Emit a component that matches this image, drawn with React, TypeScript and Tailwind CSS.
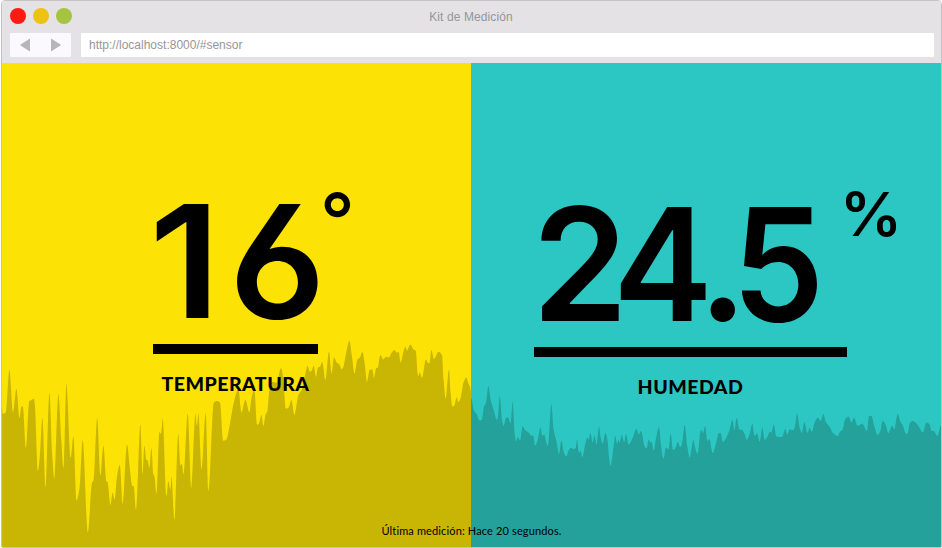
type Point = [number, number];

const TEMPERATURE: Point[] = [
  [1, 396], [3, 414], [5.7, 412.5], [9.4, 370], [13, 412.5], [16.4, 389], [19.4, 418], [21.5, 406.5], [22.8, 406.5], [26, 448],
  [29.3, 401], [31.8, 400], [33.7, 398.5], [34.8, 404], [37.8, 471.5], [39.7, 458], [42.4, 418], [45.7, 487], [49.4, 393], [52.3, 456],
  [54.4, 479.5], [58.4, 394], [61.3, 440], [63.4, 468], [66.4, 384], [70.7, 457.5], [73.4, 436.5], [76.4, 500.5], [79.7, 486.7],
  [82.6, 440], [87.8, 532.5], [92, 483], [93.6, 480], [97.2, 418], [100.4, 475], [103.4, 445.7], [106.4, 481.5], [107.4, 481.5],
  [110.4, 505], [112.6, 492.7], [114.6, 499.6], [117, 476.7], [119.8, 465], [122.6, 504], [127, 444.4], [130, 470], [132.3, 486],
  [133.6, 486], [136, 510], [140.4, 424.4], [142.6, 474], [144.4, 445.7], [146.4, 460], [147.4, 460], [149.4, 468], [151.4, 448.4],
  [153.4, 474], [154.4, 476], [156.6, 494], [159.4, 432], [161, 434], [162.7, 419], [166.6, 495.6], [168.4, 481], [170.3, 490],
  [171.6, 477], [174.4, 519.6], [178.3, 434], [180.4, 465.6], [181.7, 463.4], [183.6, 474.4], [187.7, 413.4], [191.4, 488.6],
  [195.4, 414], [197, 426], [198.4, 413.4], [201.6, 469], [205.7, 413], [208.5, 491], [213.8, 402.6], [216.7, 401], [220, 402.4],
  [223, 440.7], [226.4, 439.4], [230, 423.4], [234.4, 400], [238.4, 389.4], [241.4, 412.4], [245.4, 399.7], [249.4, 412.4],
  [251.7, 396.7], [254.4, 390], [257, 424.7], [259, 423.4], [261.4, 415], [263.4, 426], [265.7, 414], [267.3, 411.7], [269.3, 390],
  [271.7, 381.7], [276.7, 382.7], [281, 368], [283.4, 380], [285.7, 408.7], [288.7, 407.4], [291.4, 400], [294.4, 415],
  [298.4, 395], [301.7, 390], [304.5, 378], [307.7, 366], [309.7, 371.7], [311.7, 370.7], [313.7, 365.7], [316, 376.7], [318, 367.4],
  [320, 366.7], [322.3, 362], [325.3, 380], [329, 351.4], [331.6, 373.4], [334, 357.4], [336.7, 362.4], [339.4, 364.4], [341.7, 369.4],
  [343.4, 366.7], [346.7, 350], [349.4, 340.7], [352, 356.7], [354.4, 373.4], [357.4, 359.4], [360, 357.4], [362.4, 352],
  [364.7, 363.4], [367, 381.7], [369.7, 369.4], [372.4, 369.4], [374, 377.7], [376, 368.4], [377.7, 367.7], [380.3, 355],
  [383.4, 359.4], [386, 356.7], [388.7, 357.4], [391.7, 352.7], [394.4, 350], [397, 352.7], [398.6, 351.7], [400.7, 362.4],
  [404, 349.4], [405.4, 346.7], [407, 350.4], [410.4, 344.4], [413.4, 349.4], [415.7, 350.7], [418.2, 376], [419.7, 372.4],
  [422, 377.7], [426, 359.4], [427.7, 362.7], [429.4, 363.4], [431.4, 350], [434, 359], [438.4, 351.7], [442, 355], [443.7, 380],
  [445.7, 398.7], [449, 369.4], [450.7, 393.4], [452.3, 406.4], [454, 406], [456.7, 397.4], [458.4, 402], [460.7, 397.7],
  [463.4, 382.7], [466.4, 377.4], [468.4, 383.4], [470, 386.7], [471.3, 393],
];

const HUMIDITY: Point[] = [
  [471, 398], [474, 410.7], [476.7, 414], [479.3, 420.3], [481.7, 420], [484, 406.7], [486, 402.7], [488.4, 386], [490.7, 400],
  [493.7, 410], [496.7, 419.7], [498, 416.7], [499.7, 396], [502, 420], [503.7, 426], [506, 417.7], [508, 417.4], [510.7, 423.4],
  [512.7, 401.7], [514.7, 433.4], [516, 441], [518, 437], [520, 440.7], [522.7, 426], [525, 430], [528.4, 432.4], [531.7, 435.7],
  [533.4, 435.7], [535, 445.7], [538, 438.4], [540.4, 427.7], [542.4, 435.7], [544, 434.4], [547.7, 446], [549, 436.7],
  [551.3, 403.7], [553.7, 430], [556.7, 442.4], [559, 454], [561.4, 440.4], [563.7, 451.7], [566.4, 456.4], [568.4, 451],
  [571, 447.7], [573.4, 449], [575.7, 448], [577, 439.4], [579, 452.7], [580.4, 450.7], [582.4, 457], [585, 445], [587.4, 437.4],
  [588.7, 439.4], [590.4, 432.7], [592.7, 442.4], [594.4, 435.7], [596.7, 444.7], [599, 426.7], [600.7, 437.4], [602.7, 443.4],
  [605.4, 433], [607.7, 441.7], [609, 456.7], [610.4, 465.7], [613, 451.7], [615.4, 435.7], [617, 443.7], [618.4, 439.7],
  [619.7, 442.7], [621.7, 435], [624.3, 442], [626, 434], [628.7, 444.4], [632.7, 437.7], [636.4, 429], [639, 434.4],
  [640.7, 431], [642, 433.4], [644.4, 446], [646.7, 448.4], [648.7, 439.4], [650.3, 442.4], [651.7, 441.7], [653.7, 450.7],
  [656, 438.4], [659, 427], [661, 445], [663.4, 458.7], [666, 447.4], [668.7, 449.4], [670.7, 433.4], [673, 450], [676, 446.7],
  [677.7, 442], [680.4, 447], [682, 443.4], [684.7, 425], [687.4, 446.7], [689.7, 457.4], [693.4, 440], [695.4, 448.4],
  [697.7, 453.7], [700.4, 431.7], [701.7, 430], [703, 433.4], [705, 426], [707.4, 441], [709.4, 439], [712.7, 453],
  [716.4, 441.7], [718.4, 433.4], [720.7, 433], [723, 442], [726.7, 436.7], [729.4, 430], [732.4, 420], [734.4, 430],
  [736.7, 417.7], [739.4, 429.4], [741.7, 429.7], [744.4, 433.4], [746.7, 439.7], [749.7, 433.4], [752.4, 424], [754.4, 435.7],
  [757, 433.4], [759.7, 441.4], [762.4, 427.4], [764.7, 439.7], [767.4, 436.7], [769.7, 431.7], [771.4, 432.7], [773.7, 424.4],
  [776.4, 436.4], [782, 437], [785.4, 429], [787.4, 434.4], [789.7, 429.4], [793.4, 430], [795, 426.7], [797, 413.4],
  [799.4, 426.7], [801.7, 432.7], [804.4, 422], [807.4, 433], [809.7, 427.7], [811.7, 431.7], [815, 421.7], [818, 417.7],
  [820.7, 421], [823.4, 414], [825.7, 421.7], [830, 427.4], [832.7, 432.7], [837.7, 436], [840, 431.7], [842.7, 429.4],
  [845, 419.4], [848.7, 416.4], [851.4, 422.4], [854, 417.7], [857.7, 425.7], [862.4, 423.7], [867, 431], [869, 416],
  [871.4, 416], [874.4, 426.7], [877.7, 435], [880.4, 430.7], [882.7, 420.7], [885.7, 425], [888.4, 433], [892, 426],
  [894.4, 429.4], [897.7, 414], [900.4, 421.7], [903, 425.7], [905.7, 433.4], [907.7, 433.4], [909.7, 423.4], [912.7, 421],
  [916.7, 423.7], [919.4, 427.4], [922.7, 432.4], [926.4, 422.4], [929.7, 424.4], [931.4, 430.7], [934.4, 431.4], [937.4, 436],
  [941, 425],
];

const BOTTOM = 548;

// Monotone cubic through the samples: smooth slopes, rounded peaks, no overshoot.
function areaPath(points: Point[]): string {
  const n = points.length;
  const slope = (i: number) => {
    if (i === 0 || i === n - 1) return 0;
    const a = (points[i][1] - points[i - 1][1]) / (points[i][0] - points[i - 1][0]);
    const b = (points[i + 1][1] - points[i][1]) / (points[i + 1][0] - points[i][0]);
    return a * b <= 0 ? 0 : (2 * a * b) / (a + b);
  };
  let d = `M${points[0][0]} ${BOTTOM}L${points[0][0]} ${points[0][1]}`;
  for (let i = 0; i < n - 1; i++) {
    const [x0, y0] = points[i];
    const [x1, y1] = points[i + 1];
    const h = (x1 - x0) / 3;
    d += `C${x0 + h} ${y0 + slope(i) * h} ${x1 - h} ${y1 - slope(i + 1) * h} ${x1} ${y1}`;
  }
  return `${d}L${points[n - 1][0]} ${BOTTOM}Z`;
}

function Chart({ points, viewBox, className }: { points: Point[]; viewBox: string; className: string }) {
  return (
    <svg className={`absolute inset-0 h-full w-full ${className}`} viewBox={viewBox} preserveAspectRatio="none">
      <path d={areaPath(points)} />
    </svg>
  );
}

function Toolbar() {
  return (
    <header className="flex h-[62px] flex-col bg-[#e4e2e5] pl-2 pr-[7px] font-['Liberation_Sans',sans-serif] text-xs text-[#969696]">
      <div className="grid h-8 grid-cols-[1fr_auto_1fr] items-center">
        <div className="flex gap-[7.5px] pb-0.5">
          <span className="size-[15.5px] rounded-full bg-[#ff1a12]" />
          <span className="size-[15.5px] rounded-full bg-[#edc211]" />
          <span className="size-[15.5px] rounded-full bg-[#a5c441]" />
        </div>
        <span className="pr-0.5 tracking-[0.1px]">Kit de Medición</span>
      </div>
      <div className="flex h-6 gap-2.5">
        <div className="flex w-[61px] items-center justify-between rounded-[1px] bg-[#fbf9fd] px-2.5">
          <svg className="h-[14px] w-[11px] fill-[#b6b5bc]" viewBox="0 0 11 14">
            <path d="M10 .5v13L.5 7.6V6.4z" />
          </svg>
          <svg className="h-[14px] w-[11px] fill-[#b6b5bc]" viewBox="0 0 11 14">
            <path d="M1 .5v13l9.5-5.9V6.4z" />
          </svg>
        </div>
        <div className="flex flex-1 items-center rounded-[1px] bg-white px-2">http://localhost:8000/#sensor</div>
      </div>
    </header>
  );
}

const FIGURES =
  "flex h-[143px] font-['Inter',sans-serif] text-[157px] font-semibold leading-[120px] [font-feature-settings:'cv03']";
const LABEL = 'mt-[18px] text-center text-[19.5px] font-black leading-6 tracking-[0.5px]';

export default function App() {
  return (
    <div className="h-[548px] w-[942px] bg-white pl-px font-['Lato',sans-serif] text-black">
      <div className="relative flex h-full flex-col overflow-hidden rounded-b-[2px] rounded-t-[4px] border border-[#c4c2c5]">
        <Toolbar />
        <main className="flex flex-1">
          <section className="relative w-[469px] bg-[#fce205]">
            <Chart points={TEMPERATURE} viewBox="2 63 469 484" className="fill-[#c8b504]" />
            <div className="relative pl-[151px] pt-[138px]">
              <div className={FIGURES}>
                <span className="-ml-1 w-[80px] origin-left scale-x-[1.08]">1</span>
                <span className="w-[91px] origin-left scale-x-[1.02]">6</span>
                <span className="text-[76px] font-medium leading-[38px]">°</span>
              </div>
              <div className="h-2.5 w-[165px] bg-black" />
              <p className={`w-[165px] ${LABEL}`}>TEMPERATURA</p>
            </div>
          </section>
          <section className="relative w-[470px] bg-[#2dc7c3]">
            <Chart points={HUMIDITY} viewBox="471 63 470 484" className="fill-[#24a19b]" />
            <div className="relative pl-[63px] pt-[141px]">
              <div className={FIGURES}>
                <span className="-ml-0.5 w-[81px] origin-left scale-x-[.98]">2</span>
                <span className="w-[85px] origin-left scale-x-[.955]">4</span>
                <span className="w-[34px] origin-left scale-x-[.99]">.</span>
                <span className="w-[108px] origin-left scale-x-[.936]">5</span>
                <span className="origin-left scale-x-[1.03] text-[60px] leading-[21px]">%</span>
              </div>
              <div className="h-2.5 w-[313px] bg-black" />
              <p className={`w-[313px] ${LABEL}`}>HUMEDAD</p>
            </div>
          </section>
        </main>
        <p className="absolute bottom-2 left-0 w-full text-center text-[11px] leading-4 tracking-[0.14px] [font-variant-ligatures:none]">
          Última medición: Hace 20 segundos.
        </p>
      </div>
    </div>
  );
}
